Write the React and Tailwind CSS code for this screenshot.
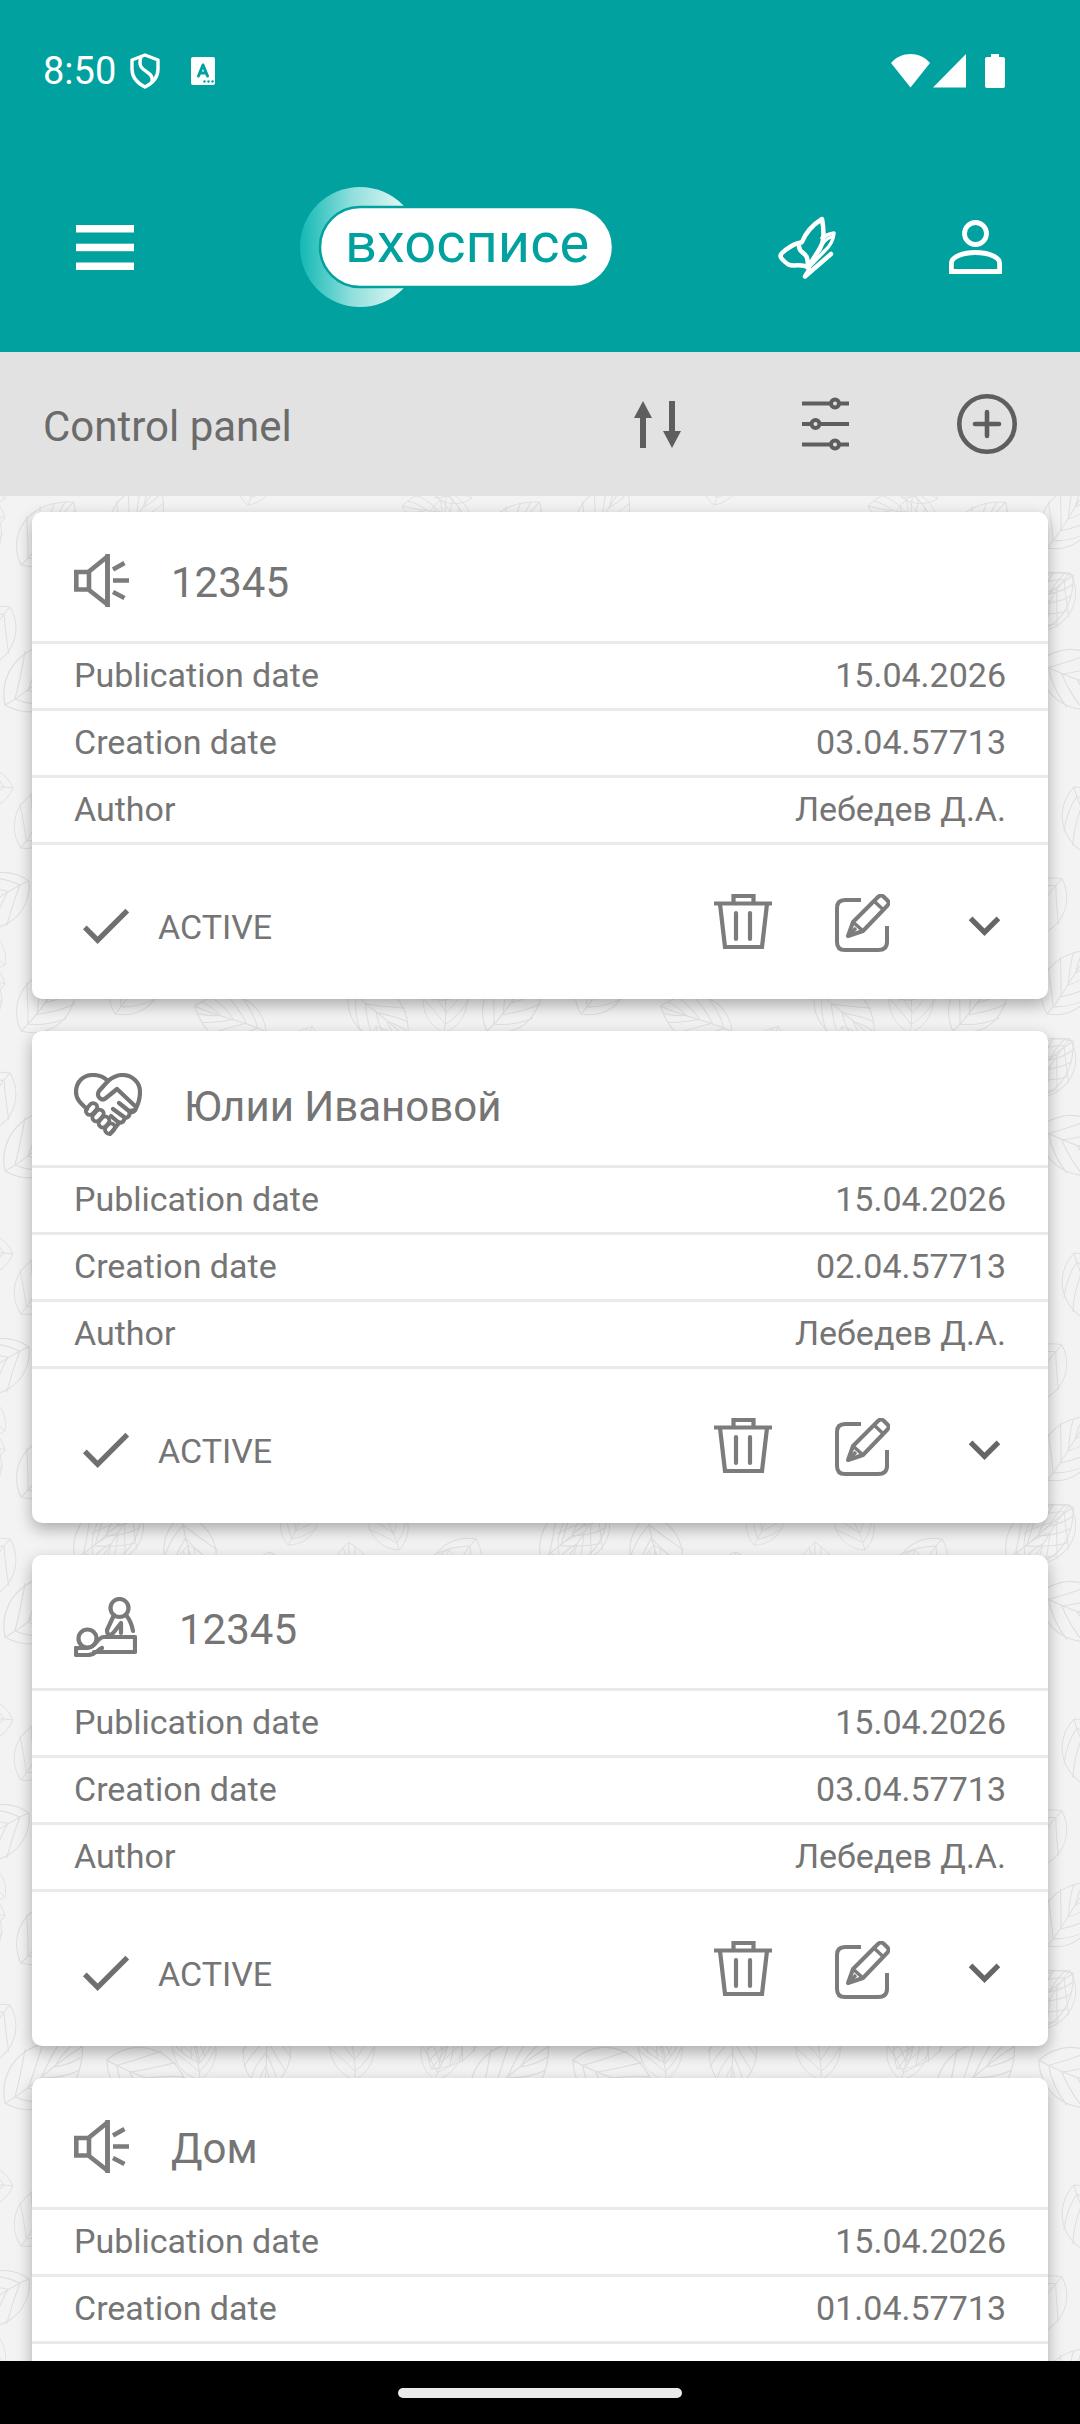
import React from "react";

const TILE = 466;

// Each leaf: x, y of its tip, direction in degrees, length.
const LEAVES = [
  [115, 548, -55, 78],
  [21, 565, -50, 82],
  [266, 566, 200, 76],
  [288, 613, -65, 58],
  [350, 522, 42, 78],
  [444, 567, -88, 72],
  [248, 505, -75, 64],
  [5, 518, 190, 70],
  [75, 627, -38, 84],
  [182, 583, 78, 84],
  [399, 618, -112, 62],
  [355, 682, -95, 72],
  [270, 620, 95, 76],
  [10, 607, 125, 78],
  [138, 573, 125, 74],
  [5, 705, -36, 96],
  [107, 662, 24, 92],
  [200, 682, -100, 70],
  [435, 682, -78, 66],
  [13, 788, 180, 74],
  [104, 790, 200, 70],
  [142, 787, 68, 80],
  [21, 848, -58, 74],
  [29, 881, 150, 84],
  [130, 879, 128, 76],
  [5, 965, 215, 60],
  [230, 800, 40, 80],
  [300, 900, -40, 80],
  [380, 800, 100, 80],
];

function LeafBackground() {
  const offsets = [-TILE, 0, TILE];
  return (
    <svg className="absolute inset-0 h-full w-full" aria-hidden="true">
      <defs>
        <g id="leaf" fill="none" stroke="#dfdfdf" strokeWidth="1.3">
          <path d="M0 0C16 -36 66 -46 100 0C66 46 16 36 0 0Z" />
          <path d="M0 0C30 5 65 -4 100 0" />
          <path d="M12 1C26 -10 36 -20 50 -33M28 2C44 -8 56 -18 70 -28M46 1C58 -6 72 -14 84 -17M64 0C74 -5 84 -7 93 -8" />
          <path d="M12 1C20 14 32 24 48 33M28 2C40 13 52 22 68 29M46 1C58 10 70 16 83 18M64 0C74 5 84 8 93 8" />
        </g>
        <g id="leaves">
          {LEAVES.map(([x, y, angle, length]) => (
            <use
              key={`${x}-${y}`}
              href="#leaf"
              transform={`translate(${x} ${y - 496}) rotate(${angle}) scale(${length / 100})`}
            />
          ))}
        </g>
        <pattern id="leafTile" width={TILE} height={TILE} patternUnits="userSpaceOnUse">
          {offsets.map((dx) =>
            offsets.map((dy) => <use key={`${dx},${dy}`} href="#leaves" x={dx} y={dy} />)
          )}
        </pattern>
      </defs>
      <rect width="100%" height="100%" fill="url(#leafTile)" />
    </svg>
  );
}

function ShieldIcon() {
  return (
    <svg width="30" height="36" viewBox="0 0 30 36" fill="none" stroke="#fff" strokeWidth="3.4" strokeLinejoin="round">
      <path d="M15 2L28 7V16C28 24 23 30 15 34C7 30 2 24 2 16V7Z" />
      <path d="M11 4C8 13 12 16 17 19C22 22 23 25 22 29" />
    </svg>
  );
}

function LanguageIcon() {
  return (
    <svg width="24" height="28" viewBox="0 0 24 28">
      <rect width="24" height="28" rx="2" fill="#fff" />
      <path d="M7.500 19L12 8L16.500 19M9 16H15" fill="none" stroke="#00a19f" strokeWidth="3" strokeLinecap="round" strokeLinejoin="round" />
      <circle cx="13.500" cy="24.500" r="1.200" fill="#00a19f" />
      <circle cx="17.500" cy="24.500" r="1.200" fill="#00a19f" />
      <circle cx="21.500" cy="24.500" r="1.200" fill="#00a19f" />
    </svg>
  );
}

function StatusBar() {
  return (
    <div className="flex h-[142px] items-center pr-[75px] pl-[43px] text-white">
      <span className="text-[38px] leading-none">8:50</span>
      <div className="ml-[14px] flex items-center gap-[31px]">
        <ShieldIcon />
        <LanguageIcon />
      </div>
      <div className="ml-auto flex items-center">
        <svg width="39" height="34" viewBox="0 0 39 34" fill="#fff">
          <path d="M0 9C10 -3 29 -3 39 9L19.500 33.500Z" />
        </svg>
        <svg className="ml-[3px]" width="33" height="34" viewBox="0 0 33 34" fill="#fff">
          <path d="M33 0V33.500H0Z" />
        </svg>
        <svg className="ml-[19px]" width="20" height="34" viewBox="0 0 20 34" fill="#fff">
          <path d="M6 0H14V3H18Q20 3 20 5V32Q20 34 18 34H2Q0 34 0 32V5Q0 3 2 3H6Z" />
        </svg>
      </div>
    </div>
  );
}

function Logo() {
  return (
    <svg width="312" height="120" viewBox="0 0 312 120" role="img" aria-label="вхосписе">
      <defs>
        <linearGradient id="ring" gradientUnits="userSpaceOnUse" x1="0" y1="0" x2="104" y2="0">
          <stop offset="0" stopColor="#12b9b5" />
          <stop offset="0.500" stopColor="#90dfdc" />
          <stop offset="1" stopColor="#e2f6f5" />
        </linearGradient>
      </defs>
      <circle cx="60" cy="60" r="60" fill="url(#ring)" />
      <rect x="20" y="20" width="293" height="80" rx="40" fill="#fff" stroke="#00a19f" strokeWidth="2.500" />
      <text x="45" y="75" fontSize="56" fill="#00a19f" fontFamily="Roboto, sans-serif">вхосписе</text>
    </svg>
  );
}

function AppBar() {
  return (
    <div className="flex h-[210px] items-center pr-[78px] pl-[76px]">
      <button aria-label="Menu">
        <svg width="58" height="45" viewBox="0 0 58 45" fill="#fff">
          <rect width="58" height="7.500" />
          <rect y="18.700" width="58" height="7.500" />
          <rect y="37.500" width="58" height="7.500" />
        </svg>
      </button>
      <a href="#home" className="ml-[166px]">
        <Logo />
      </a>
      <div className="ml-auto flex items-center gap-[113px]">
        <button aria-label="Butterfly">
          <svg width="58" height="64" viewBox="0 0 58 64" fill="none" stroke="#fff" strokeWidth="4.500" strokeLinecap="round" strokeLinejoin="round">
            <path d="M23 27.500C17 28 8 34 3.500 38.500C2 40.500 2 42 4 44C10 50 11 50.500 16 50.500C22 50 27 50 30.500 53L31 55L27 61.500L53 39" />
            <path d="M21 30C20 38 28 37 29 43C30.500 48 29 50 31 54" />
            <path d="M24 27C28 17 36 9 44 4C46 15 46 25 43 31C40 37 36 43 31 50" />
            <path d="M44 23C48 20 52 18.500 56 18C55.500 25 52 31 47 35.500L32 51" strokeWidth="3.500" />
            <path d="M53 22C47 24 44 29 42 35" strokeWidth="3" />
          </svg>
        </button>
        <button aria-label="Profile">
          <svg width="53" height="54" viewBox="0 0 53 54" fill="none" stroke="#fff" strokeWidth="4.800">
            <circle cx="26.500" cy="13.500" r="11" />
            <path d="M2.400 51.500V43C2.400 37 14 32.500 26.500 32.500S50.600 37 50.600 43V51.500Z" />
          </svg>
        </button>
      </div>
    </div>
  );
}

function ControlBar() {
  return (
    <div className="flex h-[144px] shrink-0 items-center bg-[#e2e2e2] pr-[63px] pl-[43px]">
      <h1 className="pt-[6px] text-[42px] leading-none text-[#6b6b6b]">Control panel</h1>
      <button aria-label="Sort" className="ml-auto">
        <svg width="47" height="47" viewBox="0 0 47 47" fill="#5e5e5e">
          <path d="M9 0L18 17H12V47H6V17H0Z" />
          <path d="M38 47L29 30H35V0H41V30H47Z" />
        </svg>
      </button>
      <button aria-label="Filter" className="ml-[121px]">
        <svg width="47" height="54" viewBox="0 0 47 54" fill="#e2e2e2" stroke="#5e5e5e" strokeWidth="4">
          <path d="M0 6.500H47M0 27H47M0 47.500H47" />
          <circle cx="33" cy="6.500" r="4" />
          <circle cx="13.500" cy="27" r="4" />
          <circle cx="33" cy="47.500" r="4" />
        </svg>
      </button>
      <button aria-label="Add" className="ml-[108px]">
        <svg width="60" height="60" viewBox="0 0 60 60" fill="none" stroke="#5e5e5e" strokeWidth="4.600" strokeLinecap="round">
          <circle cx="30" cy="30" r="27.700" />
          <path d="M30 18V42M18 30H42" />
        </svg>
      </button>
    </div>
  );
}

function MegaphoneIcon() {
  return (
    <svg width="55" height="53" viewBox="0 0 55 53" fill="none" stroke="#7c7c7c" strokeWidth="4.6">
      <path d="M15 18H2.300V35.500H15Z" />
      <path d="M15 17.500L33.500 2.500V50.500L15 36" />
      <path d="M33.500 0V53" />
      <path d="M39 15.500L50.500 9M39 26.500H55M39 38L50.500 44" />
    </svg>
  );
}

function HandshakeHeartIcon() {
  return (
    <svg width="68" height="63" viewBox="0 0 68 63" fill="none" stroke="#757575" strokeWidth="4.2" strokeLinecap="round" strokeLinejoin="round">
      <path d="M34 8C29 3 24 2 19 2C9 2 2 9 2 19C2 25 5 29 13 36" />
      <path d="M55 38L61 37C65 30 66 25 66 19C66 9 58 2 48 2C43 2 39 4 34 8L25 18C22 23 27 29 32 25L43 16L61 33C64 37 58 41 55 38L45 30M55 38C57 43 53 46 50 44L39 36M50 44C51 48 48 51 44 49L37 43M45 50L36 61" />
      <g strokeWidth="3.800">
        <rect x="11" y="32" width="13" height="8" rx="4" transform="rotate(-48 17.500 36)" />
        <rect x="17.500" y="38.500" width="13" height="8" rx="4" transform="rotate(-48 24 42.500)" />
        <rect x="24" y="45" width="12" height="8" rx="4" transform="rotate(-48 30 49)" />
        <rect x="30.500" y="51.500" width="11" height="8" rx="4" transform="rotate(-48 36 55.500)" />
      </g>
    </svg>
  );
}

function CareIcon() {
  return (
    <svg width="63" height="60" viewBox="0 0 63 60" fill="none" stroke="#7a7a7a" strokeWidth="4.2" strokeLinecap="round" strokeLinejoin="round">
      <circle cx="45.500" cy="11" r="9" />
      <circle cx="13.500" cy="41.500" r="9" />
      <path d="M40 18L33 33C33 39 37 39 40 35L47 26V36M52 18C56 23 58 28 59 34" />
      <path d="M2 51H13C22 51 23 40 30 40H61V55H20" />
      <path d="M2 51V58H14C22 58 23 53 28 51" />
    </svg>
  );
}

function TrashIcon() {
  return (
    <svg width="58" height="55" viewBox="0 0 58 55" fill="none" stroke="#7c7c7c" strokeWidth="4.2">
      <path d="M0 9.500H58M19.500 9.500V2H39.500V9.500" />
      <path d="M6 10L11 53H48L53 10" />
      <path d="M22 19V45M36 19V45" strokeLinecap="round" />
    </svg>
  );
}

function EditIcon() {
  return (
    <svg width="55" height="58" viewBox="0 0 55 58" fill="none" stroke="#7c7c7c" strokeWidth="4" strokeLinejoin="round">
      <path d="M26 6H10Q2 6 2 14V48Q2 56 10 56H43Q52 56 52 48V32" />
      <path d="M13 42L18 28L43 3Q46 0 49 3L52.500 6.500Q55 9 52 12L28 37Z" />
      <path d="M18 28L28 37M39 7L48.500 16M13 42L21 34" strokeWidth="3.400" />
    </svg>
  );
}

const KINDS = {
  news: { Icon: MegaphoneIcon, title: "pt-[46px]" },
  help: { Icon: HandshakeHeartIcon, title: "pt-[51px]" },
  care: { Icon: CareIcon, title: "pt-[50px]" },
};

function Row({ label, value }) {
  return (
    <div className="flex h-[67px] items-center justify-between border-b-3 border-[#eaeaea] px-[42px] pb-[2px]">
      <dt>{label}</dt>
      <dd>{value}</dd>
    </div>
  );
}

function Card({ kind, title, published, created, author }) {
  const { Icon, title: titlePadding } = KINDS[kind];
  return (
    <article className="shrink-0 rounded-[10px] bg-white text-[34px] leading-10 text-[#757575] shadow-[0_6px_16px_rgba(0,0,0,0.3)]">
      <header className="flex items-start gap-[42px] px-[42px]">
        <span className="pt-[42px]">
          <Icon />
        </span>
        <h2 className={`pb-[34px] text-[42px] leading-[49px] ${titlePadding}`}>{title}</h2>
      </header>
      <dl className="border-t-3 border-[#eaeaea]">
        <Row label="Publication date" value={published} />
        <Row label="Creation date" value={created} />
        <Row label="Author" value={author} />
      </dl>
      <footer className="flex items-start pt-[49px] pr-8 pb-[42px] pl-[42px]">
        <svg width="63" height="63" viewBox="0 0 24 24" fill="#6f6f6f" aria-hidden="true">
          <path d="M9 16.170L4.830 12l-1.420 1.410L9 19 21 7l-1.410-1.410z" />
        </svg>
        <span className="ml-[21px] pt-[13px]">ACTIVE</span>
        <div className="ml-auto flex items-start gap-[63px]">
          <button aria-label="Delete">
            <TrashIcon />
          </button>
          <button aria-label="Edit">
            <EditIcon />
          </button>
          <button aria-label="Expand">
            <svg width="63" height="63" viewBox="0 0 24 24" fill="#666">
              <path d="M16.590 8.590L12 13.170 7.410 8.590 6 10l6 6 6-6z" />
            </svg>
          </button>
        </div>
      </footer>
    </article>
  );
}

const POSTS = [
  { kind: "news", title: "12345", created: "03.04.57713" },
  { kind: "help", title: "Юлии Ивановой", created: "02.04.57713" },
  { kind: "care", title: "12345", created: "03.04.57713" },
  { kind: "news", title: "Дом", created: "01.04.57713" },
];

export default function App() {
  return (
    <div className="flex h-screen flex-col overflow-hidden bg-[#f3f3f3] font-[Roboto,sans-serif] [&_svg]:block [&_svg]:shrink-0">
      <div className="shrink-0 bg-[#00a19f]">
        <StatusBar />
        <AppBar />
      </div>
      <ControlBar />
      <main className="relative flex min-h-0 flex-1 flex-col">
        <LeafBackground />
        <div className="relative flex min-h-0 flex-1 flex-col gap-8 overflow-y-auto px-8 pt-4 pb-4 [scrollbar-width:none]">
          {POSTS.map((post, i) => (
            <Card key={i} published="15.04.2026" author="Лебедев Д.А." {...post} />
          ))}
        </div>
      </main>
      <div className="flex h-[63px] shrink-0 items-center justify-center bg-black">
        <div className="h-[10px] w-[284px] rounded-full bg-[#ebebeb]" />
      </div>
    </div>
  );
}
